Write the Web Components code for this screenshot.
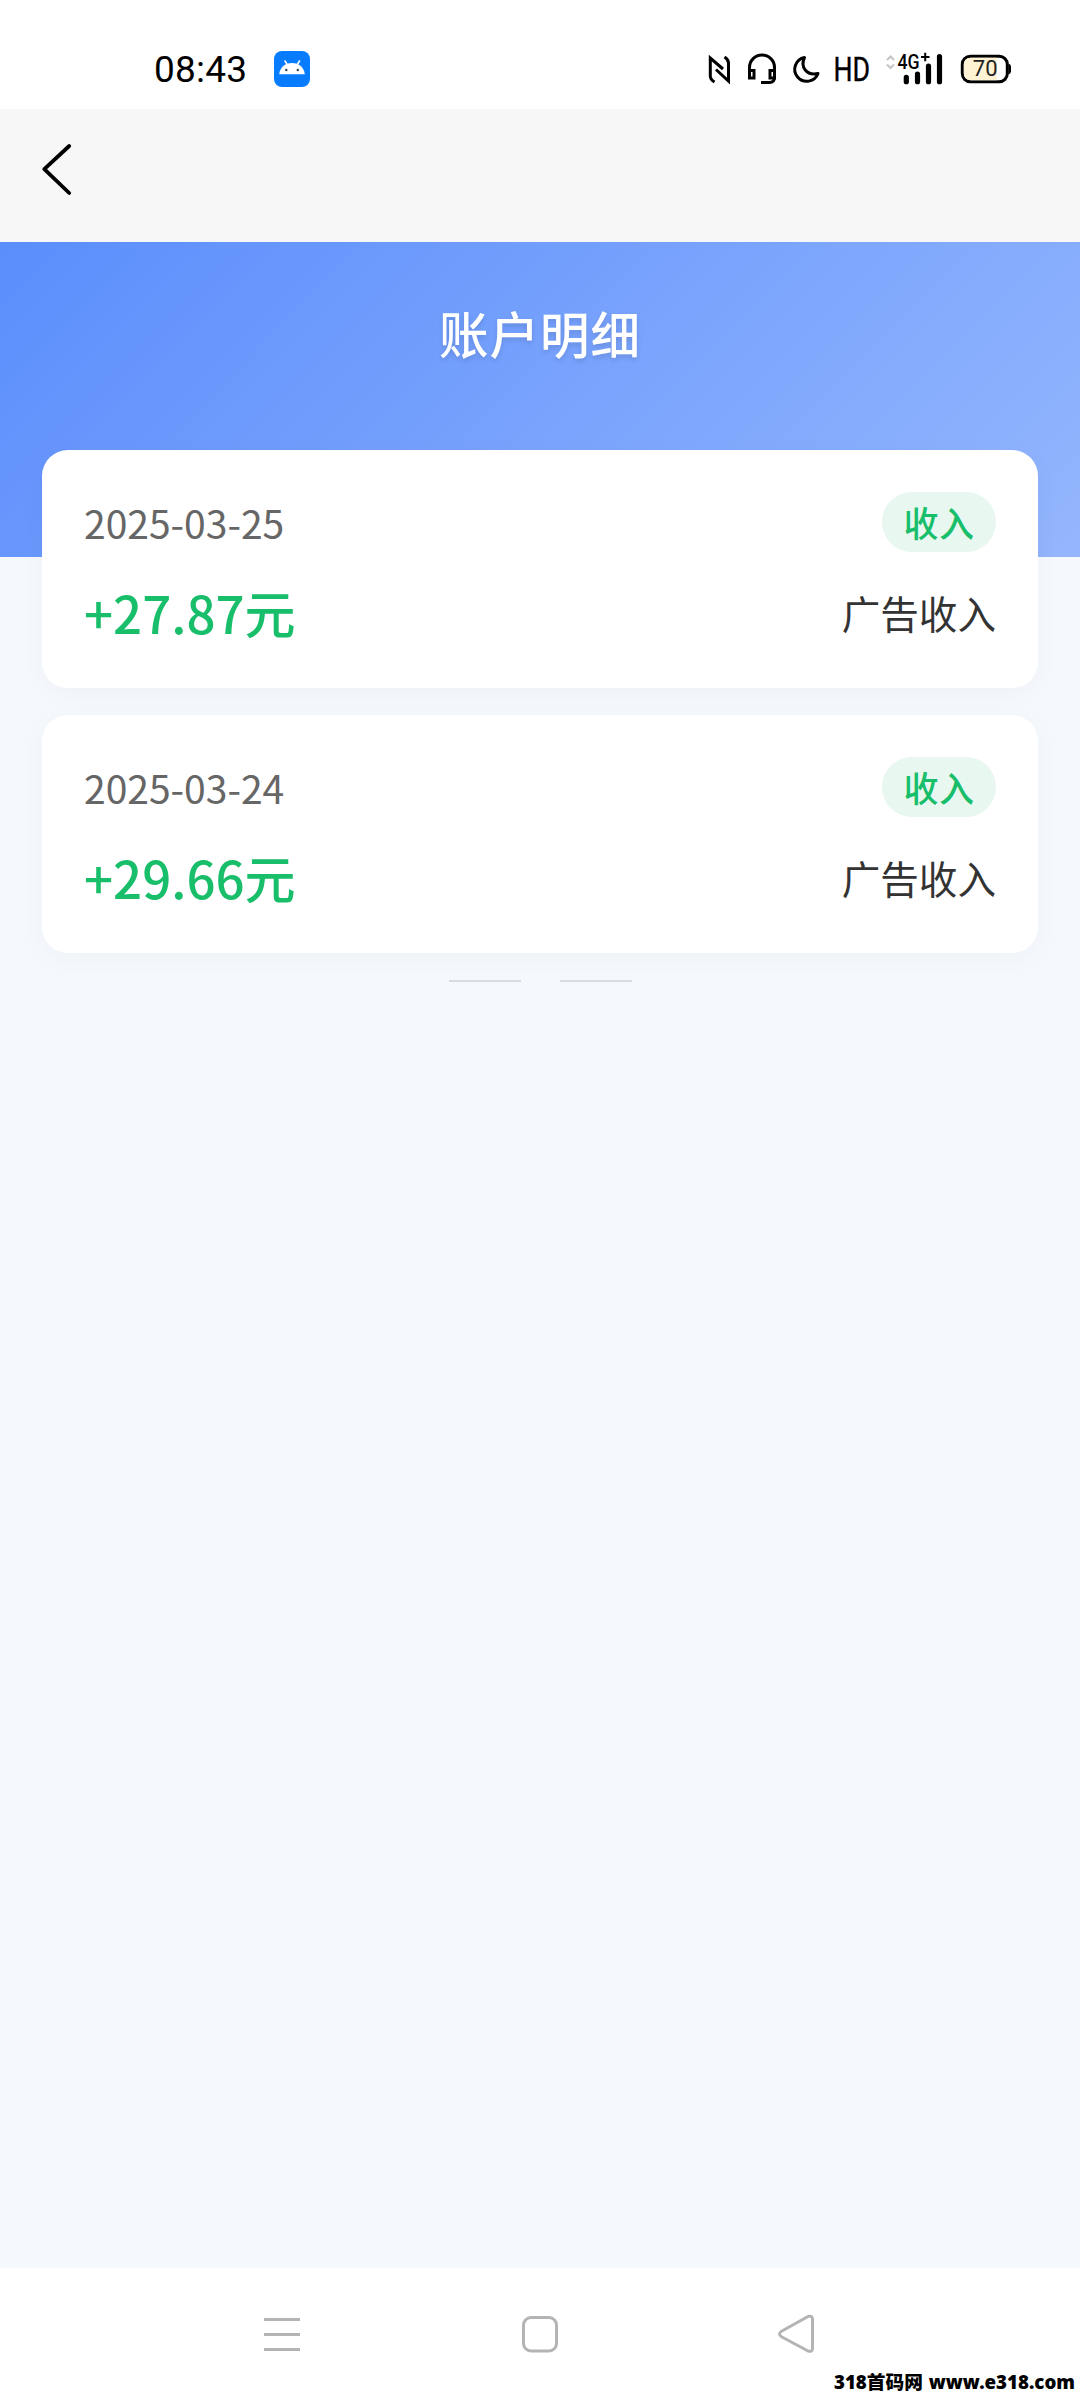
<!DOCTYPE html>
<html lang="zh-CN">
<head>
<meta charset="utf-8">
<meta name="viewport" content="width=device-width">
<title>账户明细</title>
<style>
html,body{margin:0;padding:0;background:#f5f8fc}
body{font-family:"Noto Sans CJK SC",sans-serif}
</style>
</head>
<body>
<account-page></account-page>
<script>
const define = (name, html) => customElements.define(name, class extends HTMLElement {
  constructor() {
    super();
    const t = document.createElement('template');
    t.innerHTML = html;
    this.attachShadow({mode: 'open'}).append(t.content.cloneNode(true));
  }
});

define('status-bar', `
<style>
:host{display:flex;box-sizing:border-box;height:109px;padding:28px 70px 0 154px;background:#fff;color:#000;align-items:center;font-family:Roboto,sans-serif}
svg{display:block;flex:none;overflow:visible}
.time{font-size:37px;line-height:44px;width:94px;white-space:nowrap;letter-spacing:.2px;padding-top:2px}
.app{margin-left:26px}
.right{margin-left:auto;display:flex;align-items:center}
</style>
<span class="time">08:43</span>
<svg class="app" width="36" height="36" viewBox="0 0 36 36"><rect width="36" height="36" rx="8" fill="#087cff"/><path d="M5.2 23.3C5.8 16.5 11 12 18 12s12.2 4.500 12.800 11.300z" fill="#fff"/><path d="M11 10l2.500 4M25.500 10L23 14" stroke="#fff" stroke-width="1.600" stroke-linecap="round"/><circle cx="12.300" cy="19" r="1.200" fill="#345"/><circle cx="23.800" cy="19" r="1.200" fill="#345"/></svg>
<div class="right">
<svg width="302" height="44" viewBox="708 47 302 44" fill="none" stroke="#000" stroke-width="3">
<path d="M723 69L710.300 58v18q0 3.500 4.200 6M716 69.500L728.500 81V63q0-3.500-4-6" stroke-linejoin="miter"/>
<path d="M749.500 71v-3.500a12.500 12.500 0 0 1 25 0V77q0 5.500-5 5.500H761"/><rect x="749.500" y="70.500" width="4.500" height="7.500"/><rect x="770" y="70.500" width="4.500" height="7.500"/>
<path d="M804.500 57.500A12 12 0 1 0 818 73.500C806.500 76 800 67 804.500 57.500z" stroke-linejoin="round"/>
<text transform="translate(833.500 80.700) scale(.81 1)" font-family="Roboto" font-size="33" fill="#000" stroke="#000" stroke-width=".400">HD</text>
<path d="M887 60l3.500-3.500 3.500 3.500M887 64.500l3.500 3.500 3.500-3.500" stroke="#c4c4c4" stroke-width="2"/>
<text transform="translate(897.500 68.500) scale(.91 1)" font-family="Roboto" font-weight="500" font-size="19.500" fill="#000" stroke="none">4G</text>
<path d="M921 57h8.500M925.200 52.800v8.500" stroke-width="2"/>
<path d="M906.300 77.300v4.400M917.500 74v7.700M928.500 66v15.700M939.500 56.500v25.200" stroke-width="5.200" stroke-linecap="round"/>
<rect x="962.300" y="56.300" width="45" height="25.400" rx="8" fill="#fff"/>
<path d="M997 57.800h-26q-7.200 0-7.200 7.200v8q0 7.200 7.200 7.200h26z" fill="#fff3d3" stroke="none"/>
<path d="M1008.500 63.500q2.500 1 2.500 3v5q0 2-2.500 3z" fill="#000" stroke="none"/>
<text x="972.800" y="76.300" font-family="Roboto" font-weight="400" font-size="22" fill="#222" stroke="none">70</text>
</svg>
</div>`);

define('nav-bar', `
<style>
:host{display:flex;box-sizing:border-box;height:133px;padding:34px 0 0 41px;background:#f7f7f7;align-items:flex-start}
svg{display:block}
</style>
<svg width="32" height="54" viewBox="0 0 32 54" fill="none" stroke="#000" stroke-width="3.800" stroke-linecap="round" stroke-linejoin="round"><path d="M28.200 3L3.300 26.200 28.200 50"/></svg>`);

define('page-hero', `
<style>
:host{display:flex;box-sizing:border-box;height:315px;padding-top:56px;justify-content:center;align-items:flex-start;background:linear-gradient(135deg,#5b8efc,#94b6fd);color:#fff;font-weight:500;font-size:49.5px;line-height:70px;letter-spacing:1px;text-shadow:0 2.6px 5px rgba(0,0,0,.12)}
</style>
<span><slot></slot></span>`);

define('type-badge', `
<style>
:host{display:flex;box-sizing:border-box;width:114px;height:60px;align-items:center;justify-content:center;border-radius:30px;background:#e8f7ef;color:#19be6b;font-weight:500;font-size:35px;line-height:60px;letter-spacing:.5px}
</style>
<slot></slot>`);

define('record-card', `
<style>
:host{display:flex;flex-direction:column;box-sizing:border-box;height:238px;padding:42px;border-radius:26px;background:#fff;box-shadow:0 5px 26px rgba(0,0,0,.03)}
.row{display:flex;justify-content:space-between;align-items:center}
.top{height:60px;margin-bottom:24px}
.bottom{height:72px}
.date{font-size:39px;line-height:60px;color:#666}
.amount{font-size:51px;line-height:72px;font-weight:500;color:#19be6b}
.kind{font-size:38.6px;line-height:60px;color:#333}
</style>
<div class="row top"><span class="date"><slot name="date"></slot></span><type-badge><slot name="type"></slot></type-badge></div>
<div class="row bottom"><span class="amount"><slot name="amount"></slot></span><span class="kind"><slot name="kind"></slot></span></div>`);

define('list-end', `
<style>
:host{display:flex;justify-content:center;gap:39px;padding-top:27px}
i{display:block;width:72px;height:2px;background:#d9dde1}
</style>
<i></i><i></i>`);

define('system-nav', `
<style>
:host{display:block;box-sizing:border-box;height:132px;background:#fff}
.icons{display:flex;justify-content:space-between;height:98px;padding:44px 264px 0;box-sizing:border-box}
svg{display:block;overflow:visible}
.mark{display:flex;justify-content:flex-end;gap:6px;padding:1px 5px 0 0;height:30px;align-items:center;font:900 18.7px/30px "Noto Sans","Noto Sans CJK SC",sans-serif;color:#000;white-space:nowrap}
</style>
<div class="icons">
<svg width="36" height="42" fill="none" stroke="#b4b4b4" stroke-width="3"><path d="M0 7.500h36M0 22.500h36M0 37.500h36"/></svg>
<svg width="36" height="42" fill="none" stroke="#b4b4b4" stroke-width="3"><rect x="1.500" y="5.500" width="33" height="33.500" rx="7.500"/></svg>
<svg width="36" height="42" fill="none" stroke="#b4b4b4" stroke-width="3"><path d="M28 4.500L1.500 19.300q-4 2.700 0 5.400L28 39q4.500 1.500 4.500-3V7.500q0-4.500-4.500-3z" stroke-linejoin="round"/></svg>
</div>
<div class="mark"><span>318首码网</span><span>www.e318.com</span></div>`);

define('account-page', `
<style>
:host{display:flex;flex-direction:column;width:1080px;height:2400px;background:#f5f8fc;overflow:hidden}
main{flex:1;display:flex;flex-direction:column}
.list{display:flex;flex-direction:column;gap:27px;padding:0 42px;margin-top:-107px}
</style>
<status-bar></status-bar>
<nav-bar></nav-bar>
<main>
<page-hero>账户明细</page-hero>
<section class="list">
<record-card><span slot="date">2025-03-25</span><span slot="type">收入</span><span slot="amount">+27.87元</span><span slot="kind">广告收入</span></record-card>
<record-card><span slot="date">2025-03-24</span><span slot="type">收入</span><span slot="amount">+29.66元</span><span slot="kind">广告收入</span></record-card>
</section>
<list-end></list-end>
</main>
<system-nav></system-nav>`);
</script>
</body>
</html>
